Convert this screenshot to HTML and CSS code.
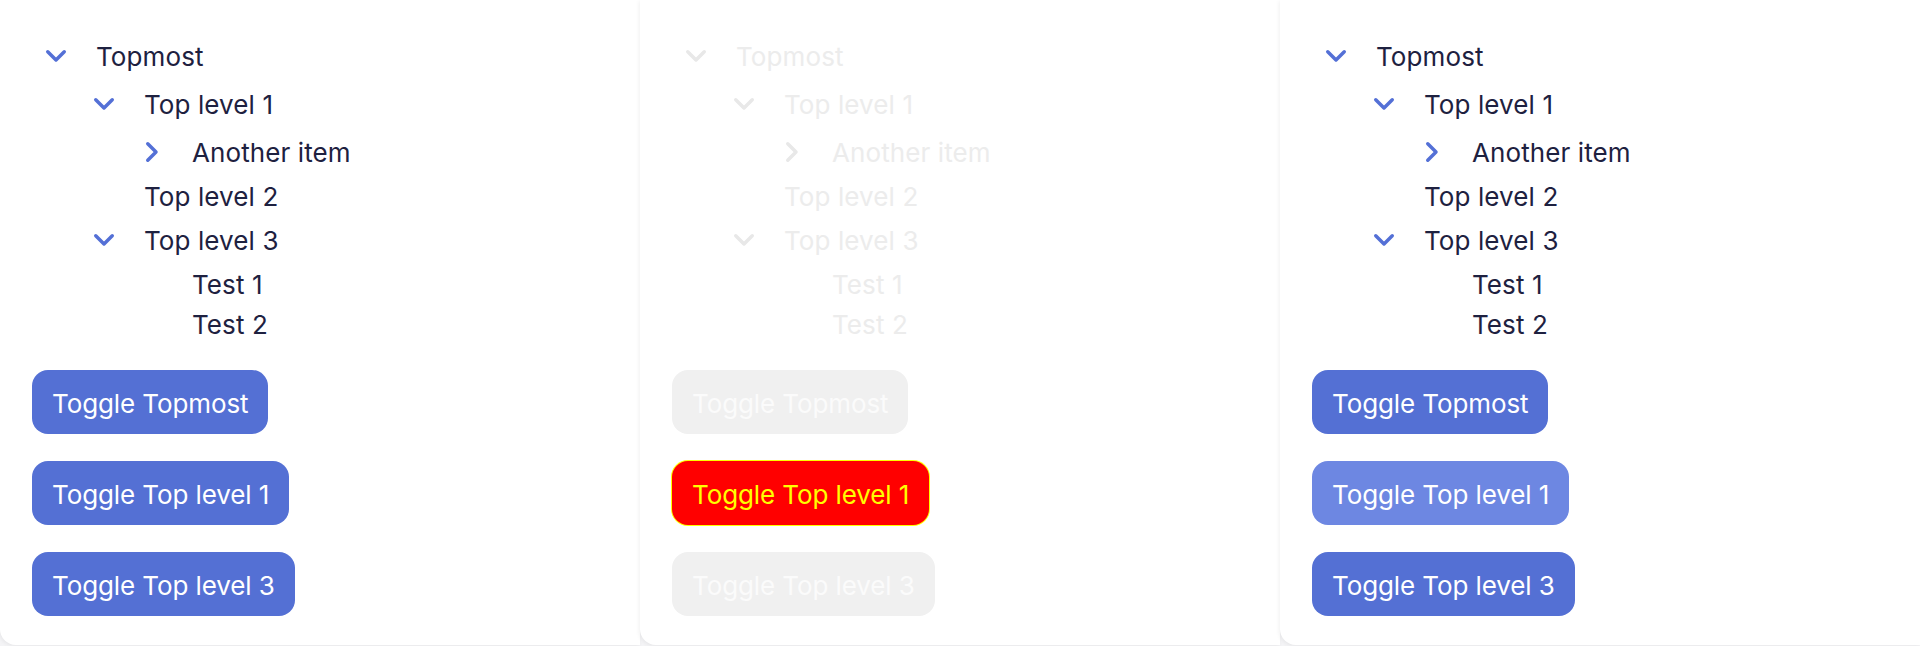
FILE: index.html
```html
<!DOCTYPE html>
<html>
<head>
<meta charset="utf-8">
<link rel="stylesheet" href="styles.css">
</head>
<body>
<div class="stage">
  <section class="panel">
    <ul class="tree">
      <li><div class="row"><span class="tw"><svg viewBox="0 0 24 24"><path d="M3.75 7.75 12 16l8.25-8.25"/></svg></span><span class="lbl">Topmost</span></div>
        <ul>
          <li><div class="row"><span class="tw"><svg viewBox="0 0 24 24"><path d="M3.75 7.75 12 16l8.25-8.25"/></svg></span><span class="lbl">Top level 1</span></div>
            <ul>
              <li><div class="row"><span class="tw"><svg viewBox="0 0 24 24"><path d="M7.75 3.75 16 12l-8.25 8.25"/></svg></span><span class="lbl">Another item</span></div></li>
            </ul>
          </li>
          <li><div class="row leaf"><span class="sp"></span><span class="lbl">Top level 2</span></div></li>
          <li><div class="row"><span class="tw"><svg viewBox="0 0 24 24"><path d="M3.75 7.75 12 16l8.25-8.25"/></svg></span><span class="lbl">Top level 3</span></div>
            <ul>
              <li><div class="row leaf"><span class="sp"></span><span class="lbl">Test 1</span></div></li>
              <li><div class="row leaf"><span class="sp"></span><span class="lbl">Test 2</span></div></li>
            </ul>
          </li>
        </ul>
      </li>
    </ul>
    <div class="actions">
      <button class="btn">Toggle Topmost</button>
      <button class="btn">Toggle Top level 1</button>
      <button class="btn">Toggle Top level 3</button>
    </div>
  </section>

  <section class="panel disabled">
    <ul class="tree">
      <li><div class="row"><span class="tw"><svg viewBox="0 0 24 24"><path d="M3.75 7.75 12 16l8.25-8.25"/></svg></span><span class="lbl">Topmost</span></div>
        <ul>
          <li><div class="row"><span class="tw"><svg viewBox="0 0 24 24"><path d="M3.75 7.75 12 16l8.25-8.25"/></svg></span><span class="lbl">Top level 1</span></div>
            <ul>
              <li><div class="row"><span class="tw"><svg viewBox="0 0 24 24"><path d="M7.75 3.75 16 12l-8.25 8.25"/></svg></span><span class="lbl">Another item</span></div></li>
            </ul>
          </li>
          <li><div class="row leaf"><span class="sp"></span><span class="lbl">Top level 2</span></div></li>
          <li><div class="row"><span class="tw"><svg viewBox="0 0 24 24"><path d="M3.75 7.75 12 16l8.25-8.25"/></svg></span><span class="lbl">Top level 3</span></div>
            <ul>
              <li><div class="row leaf"><span class="sp"></span><span class="lbl">Test 1</span></div></li>
              <li><div class="row leaf"><span class="sp"></span><span class="lbl">Test 2</span></div></li>
            </ul>
          </li>
        </ul>
      </li>
    </ul>
    <div class="actions">
      <button class="btn">Toggle Topmost</button>
      <button class="btn focus">Toggle Top level 1</button>
      <button class="btn">Toggle Top level 3</button>
    </div>
  </section>

  <section class="panel">
    <ul class="tree">
      <li><div class="row"><span class="tw"><svg viewBox="0 0 24 24"><path d="M3.75 7.75 12 16l8.25-8.25"/></svg></span><span class="lbl">Topmost</span></div>
        <ul>
          <li><div class="row"><span class="tw"><svg viewBox="0 0 24 24"><path d="M3.75 7.75 12 16l8.25-8.25"/></svg></span><span class="lbl">Top level 1</span></div>
            <ul>
              <li><div class="row"><span class="tw"><svg viewBox="0 0 24 24"><path d="M7.75 3.75 16 12l-8.25 8.25"/></svg></span><span class="lbl">Another item</span></div></li>
            </ul>
          </li>
          <li><div class="row leaf"><span class="sp"></span><span class="lbl">Top level 2</span></div></li>
          <li><div class="row"><span class="tw"><svg viewBox="0 0 24 24"><path d="M3.75 7.75 12 16l8.25-8.25"/></svg></span><span class="lbl">Top level 3</span></div>
            <ul>
              <li><div class="row leaf"><span class="sp"></span><span class="lbl">Test 1</span></div></li>
              <li><div class="row leaf"><span class="sp"></span><span class="lbl">Test 2</span></div></li>
            </ul>
          </li>
        </ul>
      </li>
    </ul>
    <div class="actions">
      <button class="btn">Toggle Topmost</button>
      <button class="btn hover">Toggle Top level 1</button>
      <button class="btn">Toggle Top level 3</button>
    </div>
  </section>
</div>
</body>
</html>
```

FILE: styles.css
```css
html, body {
  margin: 0;
  padding: 0;
  background: #f4f4f6;
}
body {
  font-family: "Inter", "Noto Sans", sans-serif;
  color: #1e2140;
  overflow: hidden;
}
.stage {
  display: flex;
  width: 1920px;
  height: 646px;
}
.panel {
  width: 640px;
  height: 645px;
  box-sizing: border-box;
  background: #ffffff;
  border-bottom-left-radius: 16px;
  box-shadow: -1px 1px 4px rgba(0, 0, 0, 0.06);
  padding: 32px 32px 0 32px;
  display: flex;
  flex-direction: column;
}
.tree, .tree ul {
  list-style: none;
  margin: 0;
  padding: 0;
}
.tree ul {
  padding-left: 48px;
}
.row {
  display: flex;
  align-items: center;
  gap: 16px;
  height: 48px;
}
.row.leaf {
  height: 40px;
}
.tw, .sp {
  width: 48px;
  height: 48px;
  display: flex;
  align-items: center;
  justify-content: center;
  flex: none;
}
.sp { height: 40px; }
.tw svg {
  width: 24px;
  height: 24px;
  fill: none;
  stroke: #5470d6;
  stroke-width: 3.5;
  stroke-linecap: round;
  stroke-linejoin: round;
}
.lbl {
  font-size: 26px;
  line-height: 40px;
  letter-spacing: 0.1px;
  padding-top: 1px;
}
.actions {
  display: flex;
  flex-direction: column;
  align-items: flex-start;
  gap: 27px;
  margin-top: 26px;
}
.btn {
  font-family: "Inter", "Noto Sans", sans-serif;
  font-size: 26px;
  letter-spacing: -0.1px;
  height: 64px;
  padding: 2px 20px 0 20px;
  border: none;
  border-radius: 16px;
  background: #5470d4;
  color: #ffffff;
}
.btn.hover {
  background: #6d87e2;
}
.disabled {
  color: #ececec;
}
.disabled .tw svg {
  stroke: #e8e8e8;
}
.disabled .btn {
  background: #f0f0f0;
  color: #fbfbfb;
}
.disabled .btn.focus {
  background: #ff0000;
  color: #ffff00;
  box-shadow: 0 0 0 1px #ffff00;
}
```
